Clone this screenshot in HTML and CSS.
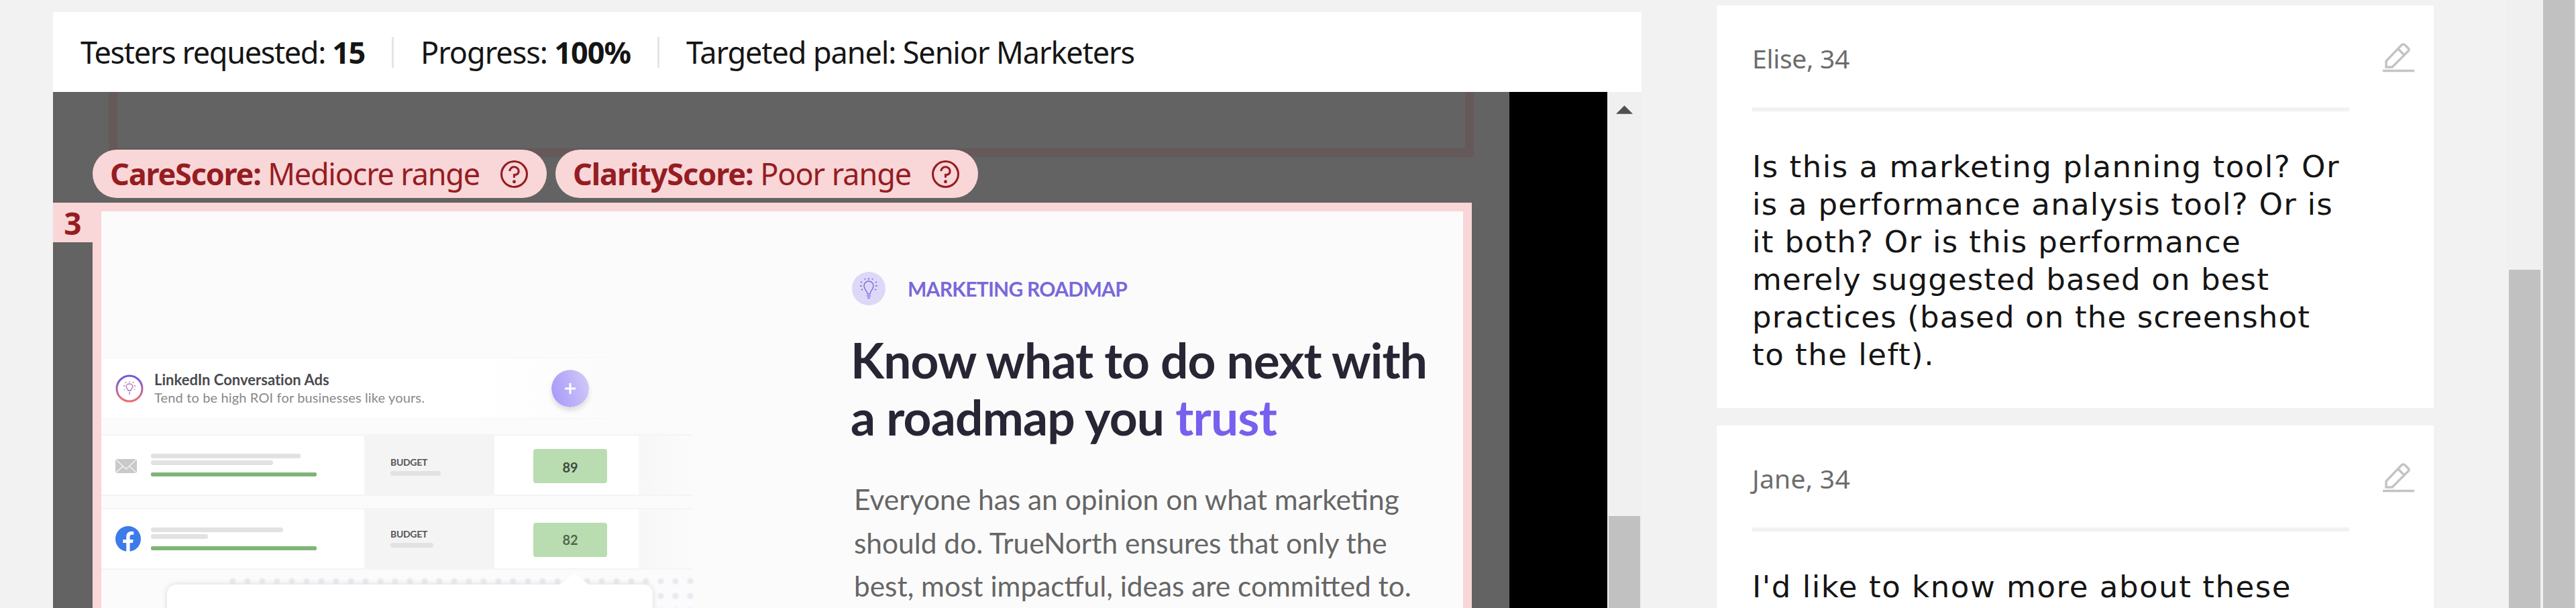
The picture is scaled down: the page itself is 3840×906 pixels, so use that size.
FILE: index.html
```html
<!DOCTYPE html>
<html lang="en"><head><meta charset="utf-8"><title>Test results</title><link rel="stylesheet" href="styles.css"></head>
<body>
<main class="results">
  <header class="summary">
    <span class="fit" data-w="424">Testers requested: <b>15</b></span><i class="sep"></i>
    <span class="fit" data-w="313">Progress: <b>100%</b></span><i class="sep"></i>
    <span class="fit" data-w="668">Targeted panel: Senior Marketers</span>
  </header>
  <div class="viewer">
    <div class="page">
      <div class="previous"></div>
      <div class="scores">
        <div class="pill"><span class="fit" data-w="551"><b>CareScore:</b> Mediocre range</span>
          <svg class="help" viewBox="0 0 40 40"><circle cx="20" cy="20" r="18.5"/><path d="M13.500 15.500a6.500 6 0 0 1 13 0c0 4-2.500 5.500-6.500 5.500v4"/><circle class="dot" cx="20" cy="31" r="2.400"/></svg></div>
        <div class="pill"><span class="fit" data-w="504"><b>ClarityScore:</b> Poor range</span>
          <svg class="help" viewBox="0 0 40 40"><circle cx="20" cy="20" r="18.5"/><path d="M13.500 15.500a6.500 6 0 0 1 13 0c0 4-2.500 5.500-6.500 5.500v4"/><circle class="dot" cx="20" cy="31" r="2.400"/></svg></div>
      </div>
      <div class="focus">
        <div class="number">3</div>
        <section class="section">
          <div class="shot">
            <div class="ads">
              <svg class="ring" viewBox="0 0 42 42"><defs><linearGradient id="g" x2="0" y2="1"><stop stop-color="#6a58e0"/><stop offset="1" stop-color="#f07070"/></linearGradient></defs><circle cx="21" cy="21" r="19" fill="none" stroke="url(#g)" stroke-width="3"/><path d="M19 24c0-3-3-3-3-6a5 4 0 0 1 10 0c0 3-3 3-3 6zM21 26v4M21 12v-2M16 13l-1-2M26 13l1-2M14 17h-2M28 17h2M14 22l-1 1M28 22l1 1" fill="none" stroke="#a776b8" stroke-width="1.300"/></svg>
              <div class="adtext"><b class="fit" data-w="261">LinkedIn Conversation Ads</b><span class="fit" data-w="403">Tend to be high ROI for businesses like yours.</span></div>
              <svg class="plus" viewBox="0 0 56 56"><defs><linearGradient id="p" x1="0" y1=".6" x2="1" y2=".3"><stop stop-color="#a99bf9"/><stop offset="1" stop-color="#cfc8f8"/></linearGradient></defs><circle cx="28" cy="28" r="28" fill="url(#p)"/><path d="M28 20v16M20 28h16" stroke="#fff" stroke-width="3"/></svg>
            </div>
            <div class="channel">
              <div class="campaign"><svg class="mail" viewBox="0 0 32 21"><path fill="#c9c9c9" d="M0 0h32v21H0z"/><path d="M0 0l16 15L32 0M0 21l11-10M32 21L21 11" fill="none" stroke="#f3f3f3" stroke-width="1.500"/></svg>
                <div class="lines"><i class="line a"></i><i class="line b"></i><i class="green"></i></div></div>
              <div class="budget"><b class="fit" data-w="55">BUDGET</b><i class="line d"></i></div>
              <div class="score">89</div>
            </div>
            <div class="channel second">
              <div class="campaign"><svg class="fb" viewBox="0 0 38 38"><circle cx="19" cy="19" r="19" fill="#3b7bea"/><path fill="#fff" d="M16.300 38V25h-5v-5h5v-4c0-5.500 3-8 7.500-8h3.500v4.700h-2.800c-2.300 0-2.900 1.300-2.900 3.200V20h5.200l-.9 5h-4.300v13z"/></svg>
                <div class="lines"><i class="line e"></i><i class="line f"></i><i class="green"></i></div></div>
              <div class="budget"><b class="fit" data-w="55">BUDGET</b><i class="line g"></i></div>
              <div class="score">82</div>
            </div>
            <div class="popover-zone"><div class="dots"></div><div class="popover"></div></div>
          </div>
          <div class="copy">
            <div class="eyebrow"><svg viewBox="0 0 50 50"><circle cx="25" cy="25" r="25" fill="#ddd8f8"/><path d="M23 33c0-5-5-6-5-12a7 7 0 0 1 14 0c0 6-5 7-5 12zM22 36h6M23 39h4M25 12V9M20 12l-1-2M30 12l1-2M15 16l-2-1M35 16l2-1M15 21h-3M35 21h3M16 26l-2 1M34 26l2 1" fill="none" stroke="#7a6bdc" stroke-width="1.500"/></svg><b class="fit" data-w="327">MARKETING ROADMAP</b></div>
            <h1><span class="fit" data-w="859">Know what to do next with</span><span class="fit" data-w="635">a roadmap you <em>trust</em></span></h1>
            <p><span class="fit" data-size data-w="813">Everyone has an opinion on what marketing</span><span class="fit" data-size data-w="795">should do. TrueNorth ensures that only the</span><span class="fit" data-size data-w="831">best, most impactful, ideas are committed to.</span></p>
          </div>
        </section>
      </div>
    </div>
    <div class="gutter"></div>
    <div class="scroll"><svg class="arrow" viewBox="0 0 26 13"><path d="M13 0l13 13H0z"/></svg><div class="thumb"></div></div>
  </div>
</main>
<aside class="comments">
  <article class="card"><div class="who"><span class="fit" data-w="145">Elise, 34</span><svg class="edit" viewBox="0 0 48 46"><path d="M6 36V27L29 3q2.500-2 5 0l5 5q2 2 0 4L15 36zM24 9l9 9" fill="none" stroke="#c4c4c4" stroke-width="3.500"/><path d="M1 41.500h47" stroke="#c4c4c4" stroke-width="3.500"/></svg></div><hr>
    <p><span class="fit" data-w="876">Is this a marketing planning tool? Or</span><span class="fit" data-w="866">is a performance analysis tool? Or is</span><span class="fit" data-w="729">it both? Or is this performance</span><span class="fit" data-w="771">merely suggested based on best</span><span class="fit" data-w="832">practices (based on the screenshot</span><span class="fit" data-w="272">to the left).</span></p></article>
  <article class="card"><div class="who"><span class="fit" data-w="146">Jane, 34</span><svg class="edit" viewBox="0 0 48 46"><path d="M6 36V27L29 3q2.500-2 5 0l5 5q2 2 0 4L15 36zM24 9l9 9" fill="none" stroke="#c4c4c4" stroke-width="3.500"/><path d="M1 41.500h47" stroke="#c4c4c4" stroke-width="3.500"/></svg></div><hr>
    <p><span class="fit" data-w="804">I'd like to know more about these</span></p></article>
</aside>
<div class="track inner"><div class="thumb"></div></div>
<div class="track outer"><div class="thumb"></div></div>
<script src="fit.js"></script>
</body></html>
```
FILE: styles.css
```css
*{box-sizing:border-box}
body{margin:0;width:3840px;height:906px;overflow:hidden;background:#f2f2f2;display:flex;font-family:Lato,sans-serif;color:#151515}
.fit{white-space:nowrap}
.results{width:2368px;height:888px;overflow:hidden;margin:18px 0 0 79px;flex:none}
.summary{height:119px;background:#fff;padding:0 41px;display:flex;align-items:center;font:45px/60px "Noto Sans",sans-serif}
.sep{width:3px;height:46px;background:#e5e5e5;margin:0 40px}
.viewer{display:flex;height:769px}
.page{width:2171px;background:#636363;flex:none;position:relative}
.previous{position:absolute;left:83px;top:0;width:2035px;height:97px;border:13px solid #655959;border-top:0}
.scores{position:relative;display:flex;gap:13px;padding:86px 0 0 59px}
.pill{height:72px;border-radius:36px;background:#f9d6d8;color:#951d22;display:flex;align-items:center;justify-content:space-between;padding:0 28px 0 26px;font:45px/72px "Noto Sans",sans-serif}
.pill:first-child{width:677px}
.pill:last-child{width:630px}
.pill b,.summary b{font-weight:700}
.help{width:41px;height:41px;fill:none;stroke:#951d22;stroke-width:3}
.help .dot{fill:#951d22;stroke:none}
.focus{display:flex;margin-top:7px}
.number{width:59px;height:59px;background:#f9d6d8;color:#951d22;text-align:center;font:bold 46px/60px "Noto Sans",sans-serif}
.section{width:2056px;height:604px;border:13px solid #f9d6d8;border-bottom:0;background:#fbfbfb;display:flex;overflow:hidden}
.shot{width:1117px;flex:none;padding-top:218px}
.ads{height:91px;width:760px;border-top:1px solid #f6f6f6;border-bottom:1px solid #f5f5f5;background:linear-gradient(90deg,#fff 75%,#fbfbfb);display:flex;align-items:center;padding-left:21px}
.ring{width:42px;height:42px;margin-right:16px}
.adtext{width:592px;color:#4a4a4e;font-size:22px;line-height:27px}
.adtext b,.adtext span{display:block}
.adtext span{color:#888;font-size:20px}
.plus{width:56px;height:56px;flex:none;border-radius:50%;box-shadow:0 5px 7px #ddd}
.channel{display:flex;height:92px;width:880px;margin-top:23px;background:linear-gradient(90deg,#fff 801px,#f7f7f7 801px,#fbfbfb 880px);border-top:2px solid #f4f4f4;border-bottom:2px solid #f4f4f4}
.channel.second{margin-top:18px}
.campaign{width:392px;display:flex;align-items:center;padding-left:21px}
.mail{width:32px;height:21px;margin:2px 21px 0 0}
.fb{width:38px;height:38px;margin-right:15px}
.line{display:block;height:7px;border-radius:3px;background:#e2e2e2;margin-bottom:3px}
.a{width:223px}.b{width:182px}.e{width:197px}.f{width:85px}
.green{display:block;width:247px;height:6px;background:#80b578;margin-top:11px;border-radius:2px}
.budget{width:194px;background:#f4f4f4;padding:31px 0 0 39px;font-size:14px;line-height:18px;color:#555}
.second .budget{padding-top:28px}
.budget b{display:block}
.d{width:75px;margin-top:4px}.g{width:64px;margin-top:4px}
.score{width:110px;height:51px;margin:20px 0 0 58px;border-radius:4px;background:#b9ddb1;color:#3c4a3c;text-align:center;font:bold 20px/55px Lato,sans-serif}
.second .score{line-height:51px;color:#52684f}
.popover-zone{position:relative}
.dots{position:absolute;left:185px;top:6px;width:704px;height:60px;background:radial-gradient(circle,#e9e9f3 3px,transparent 6px) 0 0/22px 22px}
.popover{position:absolute;left:98px;top:22px;width:724px;height:80px;border-radius:14px;background:#fff;box-shadow:0 0 8px #d8d8d8}
.popover::before{content:"";position:absolute;left:584px;top:-16px;width:46px;height:17px;background:#fff;clip-path:polygon(50% 0,100% 100%,0 100%)}
.copy{padding-top:90px;white-space:nowrap}
.eyebrow{display:flex;align-items:center;gap:33px;color:#7868da;font-size:30px;line-height:50px;padding-left:2px}
.eyebrow svg{width:50px;height:50px}
.eyebrow b{margin-right:2px}
h1{margin:39px 0 0;color:#282534;font-size:73px;line-height:85px}
h1 span,.copy p span,.card p span{display:block}
em{font-style:normal;color:#7660ee}
.copy p{margin:48px 0 0 5px;color:#666;font-size:43.500px;line-height:64.500px}
.copy p span{height:64.500px}
.gutter{width:146px;background:#000}
.scroll{width:51px;background:#f0f0f0;padding:20px 2px 0 13px}
.arrow{display:block;width:25px;height:13px;fill:#505050}
.thumb{background:#c1c1c1}
.scroll .thumb{width:47px;height:137px;margin:599px 0 0 -11px}
.comments{width:1069px;height:898px;overflow:hidden;margin:8px 0 0 112px;flex:none;display:flex;flex-direction:column;gap:26px}
.card{background:#fff;height:600px;flex:none;padding:56px 29px 0 53px}
.card:last-child{height:272px}
.who{display:flex;justify-content:space-between;align-items:flex-start;height:96px;font:39px/46px "Noto Sans",sans-serif;color:#6c6c6c}
.edit{width:48px;height:46px}
hr{width:890px;height:6px;border:0;background:#f2f2f2;margin:0}
.card p{margin:0;padding-top:55px;font:45px/56px "DejaVu Sans",sans-serif}
.track{background:#f0f0f0;width:50px;flex:none}
.inner{margin-left:109px;padding:402px 0 0 3px}
.inner .thumb{width:47px;height:504px}
.outer{width:53px;padding-left:4px}
.outer .thumb{width:47px;height:906px}
```
FILE: fit.js
```js
document.querySelectorAll('.fit').forEach(function (el) {
  var range = document.createRange();
  range.selectNodeContents(el);
  var width = range.getBoundingClientRect().width;
  if ('size' in el.dataset) {
    el.style.fontSize = parseFloat(getComputedStyle(el).fontSize) * el.dataset.w / width + 'px';
  } else {
    el.style.letterSpacing = (el.dataset.w - width) / el.textContent.length + 'px';
  }
});
```
